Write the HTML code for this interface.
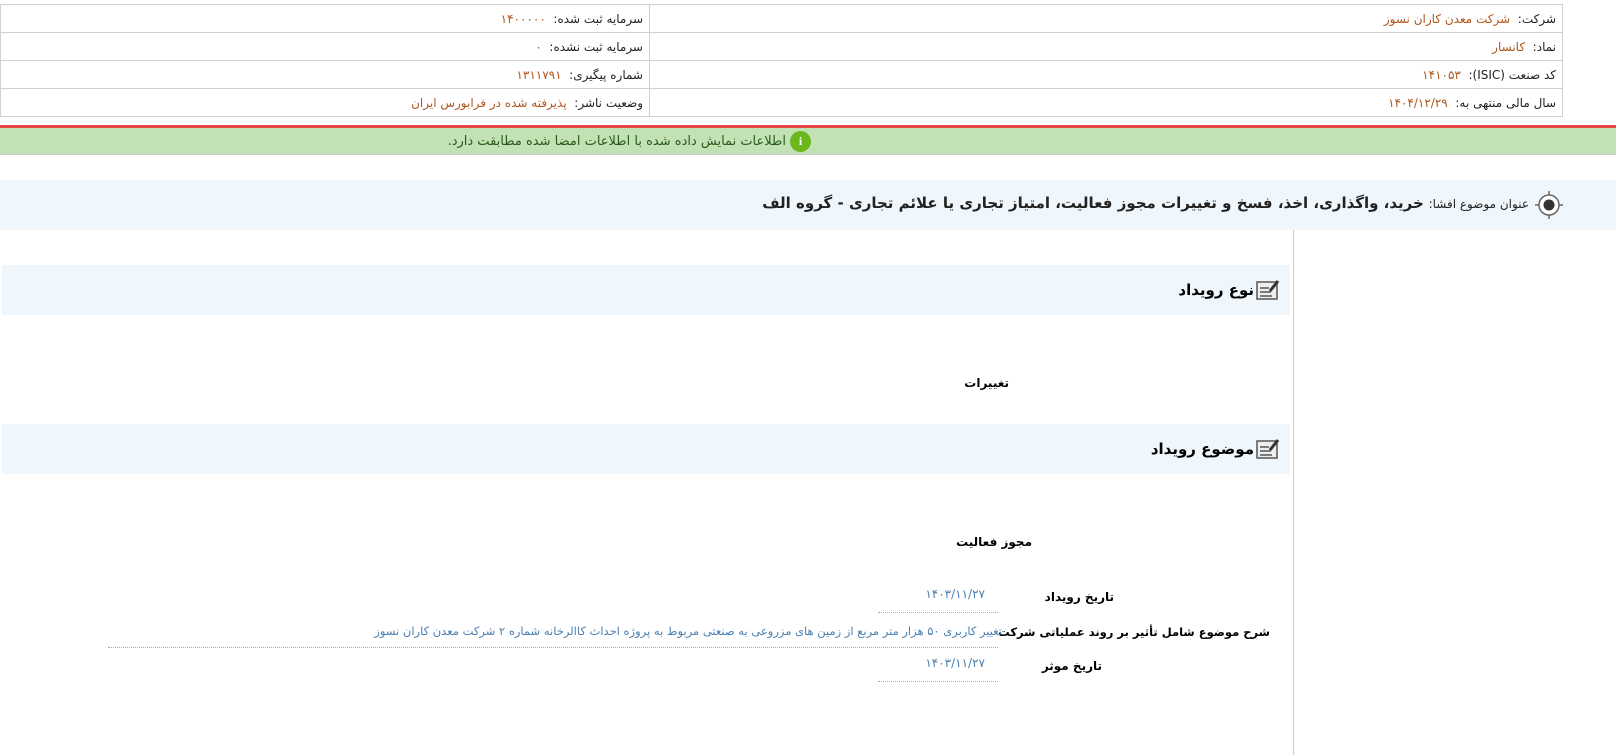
<!DOCTYPE html>
<html><head><meta charset="utf-8"><style>
body{margin:0;width:1616px;height:755px;background:#fff;font-family:"DejaVu Sans","Noto Sans CJK SC",sans-serif;font-size:12px;color:#222;position:relative;overflow:hidden;direction:rtl}
.a{position:absolute;white-space:nowrap}
table.t{position:absolute;left:0;top:4px;width:1563px;border-collapse:collapse}
table.t td{border:1px solid #d0d0d0;height:27px;padding:0 6px;text-align:right;font-size:12px}
.o{color:#b0561e}
.bl{color:#4a7fb0}
.b{font-weight:bold;color:#000}
.hd{position:absolute;left:2px;width:1288px;height:50px;background:#eff6fc}
.dot{position:absolute;border-bottom:1px dotted #aaa}
</style></head><body>
<table class="t">
<tr><td style="width:900px">شرکت:&nbsp; <span class="o">شرکت معدن کاران نسوز</span></td><td>سرمایه ثبت شده:&nbsp; <span class="o">۱۴۰۰۰۰۰</span></td></tr>
<tr><td>نماد:&nbsp; <span class="o">کانسار</span></td><td>سرمایه ثبت نشده:&nbsp; <span class="o">۰</span></td></tr>
<tr><td>کد صنعت (ISIC):&nbsp; <span class="o">۱۴۱۰۵۳</span></td><td>شماره پیگیری:&nbsp; <span class="o">۱۳۱۱۷۹۱</span></td></tr>
<tr><td>سال مالی منتهی به:&nbsp; <span class="o">۱۴۰۴/۱۲/۲۹</span></td><td>وضعیت ناشر:&nbsp; <span class="o">پذیرفته شده در فرابورس ایران</span></td></tr>
</table>
<div class="a" style="left:0;top:125px;width:1616px;height:3px;background:#e84444"></div>
<div class="a" style="left:0;top:128px;width:1616px;height:26px;background:#c2e2b5;border-bottom:1px solid #ccc"></div>
<div class="a" style="left:790px;top:131px;width:21px;height:21px;border-radius:50%;background:#6bb81c;color:#fff;font-weight:bold;text-align:center;line-height:21px;font-family:'Liberation Serif',serif">i</div>
<div class="a" style="right:830px;top:134px;color:#2a5a1a;font-size:13px">اطلاعات نمایش داده شده با اطلاعات امضا شده مطابقت دارد.</div>
<div class="a" style="left:0;top:180px;width:1616px;height:50px;background:#eff6fc"></div>
<svg class="a" style="left:1534px;top:190px" width="30" height="30"><circle cx="15" cy="15" r="10" fill="#fff" stroke="#666" stroke-width="1.5"/><circle cx="15" cy="15" r="5.5" fill="#333"/><path d="M15 1v4M15 25v4M1 15h4M25 15h4" stroke="#666" stroke-width="1.5"/></svg>
<div class="a" style="right:87px;top:194px;font-size:15px"><span style="font-size:12px">عنوان موضوع افشا:</span> <b>خرید، واگذاری، اخذ، فسخ و تغییرات مجوز فعالیت، امتیاز تجاری یا علائم تجاری - گروه الف</b></div>
<div class="a" style="left:1293px;top:230px;width:1px;height:525px;background:#ccc"></div>
<div class="hd" style="top:265px"></div>
<div class="hd" style="top:424px"></div>
<svg class="a" style="left:1256px;top:279px" width="24" height="22"><rect x="1" y="3" width="20" height="17" fill="#eee" stroke="#555" stroke-width="1.5"/><path d="M4 9h9M4 13h11M4 17h12" stroke="#555" stroke-width="1.5"/><path d="M14 12l8-10" stroke="#333" stroke-width="3"/></svg>
<svg class="a" style="left:1256px;top:438px" width="24" height="22"><rect x="1" y="3" width="20" height="17" fill="#eee" stroke="#555" stroke-width="1.5"/><path d="M4 9h9M4 13h11M4 17h12" stroke="#555" stroke-width="1.5"/><path d="M14 12l8-10" stroke="#333" stroke-width="3"/></svg>
<div class="a b" style="right:362px;top:281px;font-size:15px">نوع رویداد</div>
<div class="a b" style="right:362px;top:440px;font-size:15px">موضوع رویداد</div>
<div class="a b" style="right:607px;top:376px">تغییرات</div>
<div class="a b" style="right:584px;top:535px">مجوز فعالیت</div>
<div class="a b" style="right:502px;top:590px">تاریخ رویداد</div>
<div class="a bl" style="right:631px;top:587px">۱۴۰۳/۱۱/۲۷</div>
<div class="dot" style="left:878px;top:612px;width:120px"></div>
<div class="a b" style="right:346px;top:625px;font-size:11.5px">شرح موضوع شامل تأثیر بر روند عملیاتی شرکت</div>
<div class="a bl" style="right:614px;top:624px;font-size:11.5px">تغییر کاربری ۵۰ هزار متر مربع از زمین های مزروعی به صنعتی مربوط به پروژه احداث کاالرخانه شماره ۲ شرکت معدن کاران نسوز</div>
<div class="dot" style="left:108px;top:647px;width:890px"></div>
<div class="a b" style="right:514px;top:659px">تاریخ موثر</div>
<div class="a bl" style="right:631px;top:656px">۱۴۰۳/۱۱/۲۷</div>
<div class="dot" style="left:878px;top:681px;width:120px"></div>
</body></html>
